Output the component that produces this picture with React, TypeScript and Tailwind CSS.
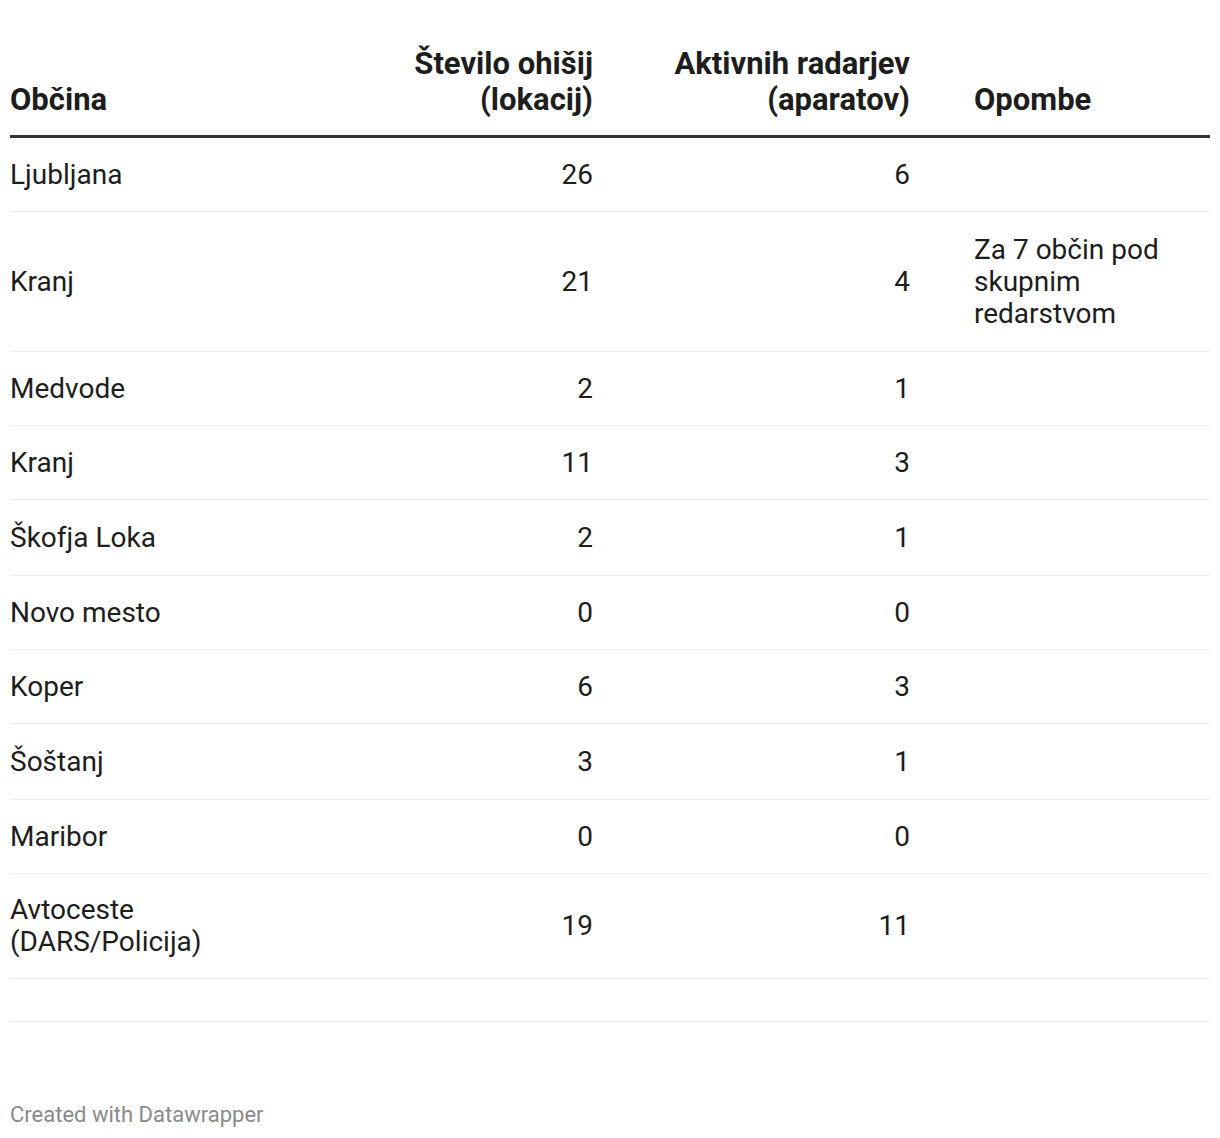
type Row = {
  name: string;
  sites: string;
  radars: string;
  note?: string;
  tall?: boolean;
  short?: boolean;
};

const rows: Row[] = [
  { name: 'Ljubljana', sites: '26', radars: '6' },
  { name: 'Kranj', sites: '21', radars: '4', note: 'Za 7 občin pod skupnim redarstvom', tall: true },
  { name: 'Medvode', sites: '2', radars: '1' },
  { name: 'Kranj', sites: '11', radars: '3' },
  { name: 'Škofja Loka', sites: '2', radars: '1', tall: true },
  { name: 'Novo mesto', sites: '0', radars: '0' },
  { name: 'Koper', sites: '6', radars: '3' },
  { name: 'Šoštanj', sites: '3', radars: '1', tall: true },
  { name: 'Maribor', sites: '0', radars: '0' },
  { name: 'Avtoceste (DARS/Policija)', sites: '19', radars: '11', short: true },
];

export default function App(): JSX.Element {
  return (
    <div className="w-[1220px] bg-white px-[10px] pt-[46px] pb-[12px] font-['Roboto','Liberation_Sans',sans-serif] text-[#1d1d1d]">
      <table className="w-[1200px] table-fixed border-separate border-spacing-0">
        <colgroup>
          <col className="w-[260px]" />
          <col className="w-[323px]" />
          <col className="w-[317px]" />
          <col className="w-[300px]" />
        </colgroup>
        <thead>
          <tr className="align-bottom text-[31px] leading-[36px]">
            <th className="border-b-[3px] border-[#333333] pb-[17px] text-left font-bold">Občina</th>
            <th className="border-b-[3px] border-[#333333] pb-[17px] pl-[60px] text-right font-bold">
              Število ohišij (lokacij)
            </th>
            <th className="border-b-[3px] border-[#333333] pb-[17px] pl-[40px] text-right font-bold">
              Aktivnih radarjev (aparatov)
            </th>
            <th className="border-b-[3px] border-[#333333] pb-[17px] pl-[64px] text-left font-bold">Opombe</th>
          </tr>
        </thead>
        <tbody className="text-[28px] leading-[32px]">
          {rows.map((r, i) => {
            const pad = r.tall
              ? 'pt-[22px] pb-[21px]'
              : r.short
                ? 'pt-[20px] pb-[20px]'
                : 'pt-[21px] pb-[20px]';
            return (
              <tr key={i} className="align-middle">
                <td className={`border-b border-[#ececec] ${pad}`}>{r.name}</td>
                <td className={`border-b border-[#ececec] pl-[60px] text-right ${pad}`}>{r.sites}</td>
                <td className={`border-b border-[#ececec] pl-[40px] text-right ${pad}`}>{r.radars}</td>
                <td className={`border-b border-[#ececec] pl-[64px] ${pad}`}>{r.note ?? ''}</td>
              </tr>
            );
          })}
          {/* trailing empty row */}
          <tr>
            <td className="border-b border-[#ececec] pt-[21px] pb-[21px]" />
            <td className="border-b border-[#ececec] pt-[21px] pb-[21px]" />
            <td className="border-b border-[#ececec] pt-[21px] pb-[21px]" />
            <td className="border-b border-[#ececec] pt-[21px] pb-[21px]" />
          </tr>
        </tbody>
      </table>

      <p className="mt-[80px] text-[22px] leading-[26px] text-[#8a8a8a]">Created with Datawrapper</p>
    </div>
  );
}
